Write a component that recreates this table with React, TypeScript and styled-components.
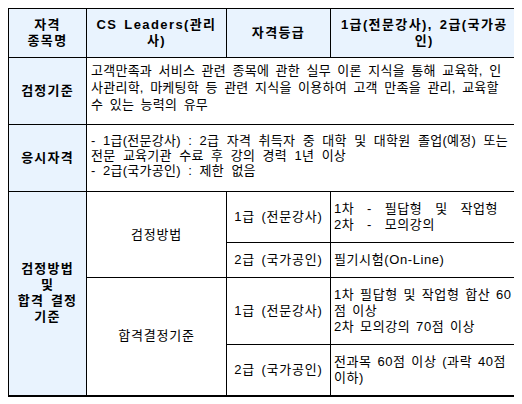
import styled, { createGlobalStyle } from "styled-components";

const GlobalStyle = createGlobalStyle`
  body {
    margin: 8px;
    background: #ffffff;
    font-family: "Liberation Sans", "Noto Sans CJK KR", sans-serif;
    color: #000000;
  }
`;

const STable = styled.table`
  width: 510px;
  table-layout: fixed;
  border-collapse: collapse;
  border-top: 1px solid #000;
  border-left: 1px solid #000;
  border-right: 2px solid #000;
  border-bottom: 2px solid #000;
  font-size: 13px;
`;

const SRow = styled.tr<{ $h: number }>`
  height: ${({ $h }) => $h}px;
`;

const SHeadCell = styled.th`
  background: #e9f3fe;
  border: 1px solid #000;
  font-weight: bold;
  letter-spacing: 1.4px;
  word-spacing: 2px;
  line-height: 16px;
  text-align: center;
  vertical-align: middle;
  padding: 0 3px;
`;

const SLabelCell = styled.td`
  background: #e9f3fe;
  border: 1px solid #000;
  font-weight: bold;
  letter-spacing: 1.2px;
  word-spacing: 2px;
  line-height: 16px;
  text-align: center;
  vertical-align: middle;
  padding: 0 2px;
`;

const STextCell = styled.td<{ $top: number; $lh: number; $ws: number }>`
  border: 1px solid #000;
  text-align: left;
  vertical-align: top;
  white-space: nowrap;
  letter-spacing: 0.25px;
  word-spacing: ${({ $ws }) => $ws}px;
  line-height: ${({ $lh }) => $lh}px;
  padding: ${({ $top }) => $top}px 4px 0 4px;
`;

const SCenterCell = styled.td`
  border: 1px solid #000;
  text-align: center;
  vertical-align: middle;
  letter-spacing: 0.8px;
  word-spacing: 2px;
  line-height: 16px;
  padding: 0 2px;
`;

const SSubCell = styled.td<{ $ws?: number }>`
  border: 1px solid #000;
  text-align: left;
  vertical-align: middle;
  white-space: nowrap;
  letter-spacing: 0.6px;
  word-spacing: ${({ $ws = 1.5 }) => $ws}px;
  line-height: 16px;
  padding: 0 2px 0 3px;
`;

export default function App() {
  return (
    <>
      <GlobalStyle />
      <STable>
        <colgroup>
          <col style={{ width: 78 }} />
          <col style={{ width: 140 }} />
          <col style={{ width: 104 }} />
          <col style={{ width: 188 }} />
        </colgroup>
        <tbody>
          <SRow $h={49}>
            <SHeadCell>
              자격
              <br />
              종목명
            </SHeadCell>
            <SHeadCell>
              CS Leaders(관리
              <br />
              사)
            </SHeadCell>
            <SHeadCell>자격등급</SHeadCell>
            <SHeadCell>
              1급(전문강사), 2급(국가공
              <br />
              인)
            </SHeadCell>
          </SRow>
          <SRow $h={67}>
            <SLabelCell>검정기준</SLabelCell>
            <STextCell colSpan={3} $top={4} $lh={17} $ws={2.6}>
              고객만족과 서비스 관련 종목에 관한 실무 이론 지식을 통해 교육학, 인
              <br />
              사관리학, 마케팅학 등 관련 지식을 이용하여 고객 만족을 관리, 교육할
              <br />수 있는 능력의 유무
            </STextCell>
          </SRow>
          <SRow $h={67}>
            <SLabelCell>응시자격</SLabelCell>
            <STextCell colSpan={3} $top={8} $lh={15} $ws={3.6}>
              - 1급(전문강사) : 2급 자격 취득자 중 대학 및 대학원 졸업(예정) 또는
              <br />
              전문 교육기관 수료 후 강의 경력 1년 이상
              <br />- 2급(국가공인) : 제한 없음
            </STextCell>
          </SRow>
          <SRow $h={51}>
            <SLabelCell rowSpan={4}>
              검정방법
              <br />및<br />
              합격 결정
              <br />
              기준
            </SLabelCell>
            <SCenterCell rowSpan={2}>검정방법</SCenterCell>
            <SCenterCell>1급 (전문강사)</SCenterCell>
            <SSubCell $ws={8.5}>
              1차 - 필답형 및 작업형
              <br />
              2차 - 모의강의
            </SSubCell>
          </SRow>
          <SRow $h={35}>
            <SCenterCell>2급 (국가공인)</SCenterCell>
            <SSubCell>필기시험(On-Line)</SSubCell>
          </SRow>
          <SRow $h={67}>
            <SCenterCell rowSpan={2}>합격결정기준</SCenterCell>
            <SCenterCell>1급 (전문강사)</SCenterCell>
            <SSubCell>
              1차 필답형 및 작업형 합산 60
              <br />점 이상
              <br />
              2차 모의강의 70점 이상
            </SSubCell>
          </SRow>
          <SRow $h={51}>
            <SCenterCell>2급 (국가공인)</SCenterCell>
            <SSubCell>
              전과목 60점 이상 (과락 40점
              <br />
              이하)
            </SSubCell>
          </SRow>
        </tbody>
      </STable>
    </>
  );
}
